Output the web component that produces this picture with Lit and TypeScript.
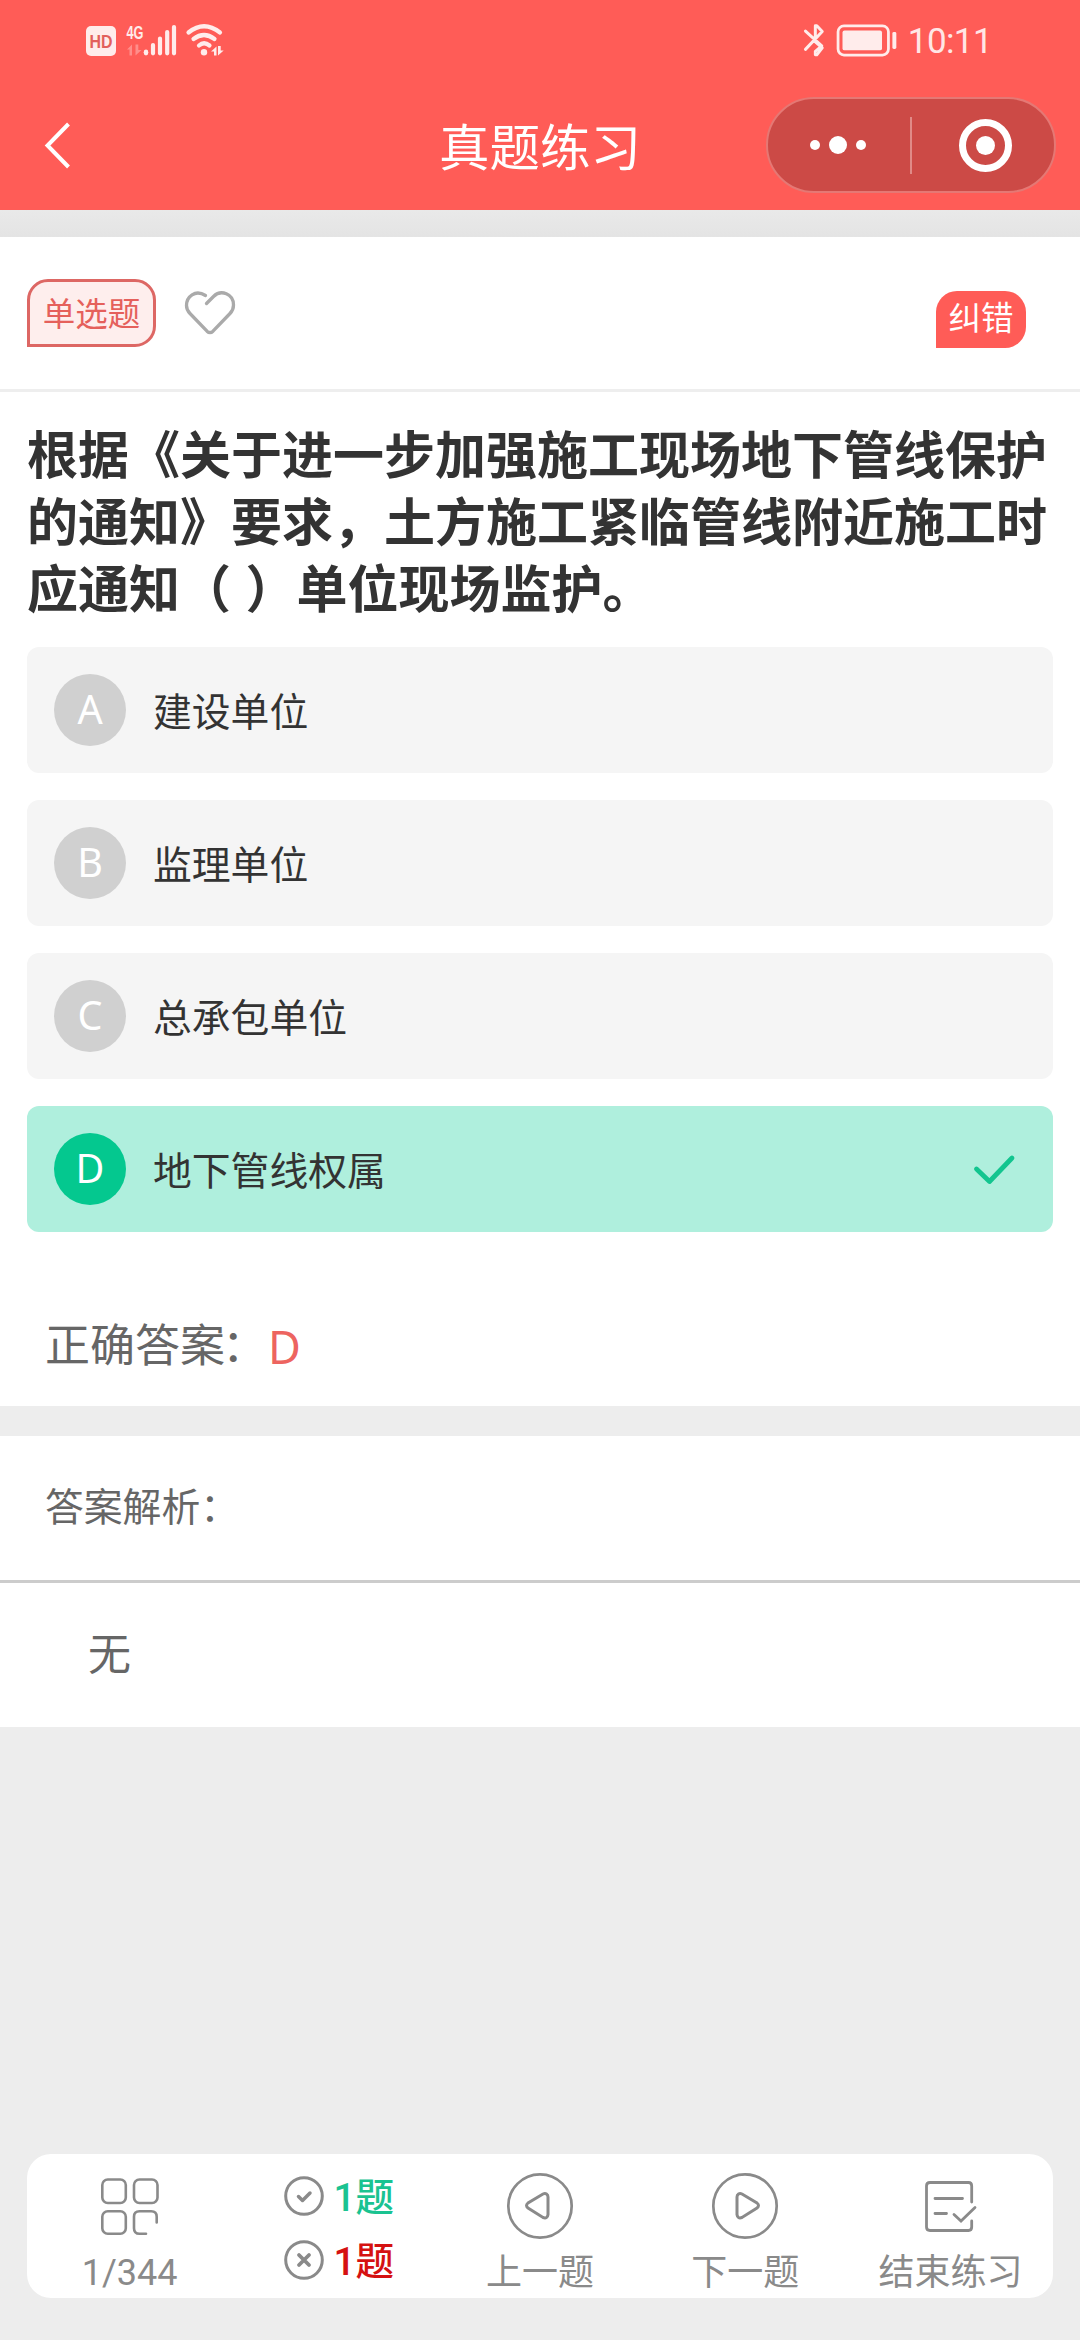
import { LitElement, html, css, svg } from "lit";
import { customElement, property } from "lit/decorators.js";
import { classMap } from "lit/directives/class-map.js";

interface Option { key: string; text: string; correct?: boolean; }

const OPTIONS: Option[] = [
  { key: "A", text: "建设单位" },
  { key: "B", text: "监理单位" },
  { key: "C", text: "总承包单位" },
  { key: "D", text: "地下管线权属", correct: true },
];

@customElement("status-bar")
class StatusBar extends LitElement {
  static styles = css`
    :host { display: flex; height: 80px; padding: 0 88px 0 86px; justify-content: space-between; color: #ffeceb; }
    svg { display: block; }
    .right { display: flex; width: 190px; white-space: nowrap; }
    .time { font: 35px/80px Roboto, sans-serif; padding-top: 2px; margin-left: 11px; letter-spacing: -0.6px; color: #ffe6e5; }
    .label { font-family: "Liberation Sans", sans-serif; font-weight: bold; }
  `;
  render() {
    return html`
      <svg width="150" height="80" viewBox="86 0 150 80" fill="currentColor">
        <rect x="86" y="26" width="30" height="30" rx="5" />
        <text class="label" x="101" y="48" font-size="18.500" text-anchor="middle" textLength="23" lengthAdjust="spacingAndGlyphs" fill="#e2605c">HD</text>
        <text class="label" x="126.500" y="38.500" font-size="19" textLength="17" lengthAdjust="spacingAndGlyphs">4G</text>
        <path d="M127 49.500l5-5v11h-2.500v-6zM135.500 44.500v11l6-5.500h-3.200v-5.500z" opacity=".35" />
        <circle cx="146" cy="52.500" r="2.300" />
        <g stroke="currentColor" stroke-width="4.200" stroke-linecap="round" fill="none">
          <path d="M146 51.500v1.800M153 45v8.300M160 38.500v14.800M167.200 32v21.300M174 27v26.300" />
        </g>
        <g stroke="currentColor" stroke-width="4.200" stroke-linecap="round" fill="none">
          <path d="M188.500 32.500Q204 20 220 32.500M193.500 39Q204 31 214.500 39M199 45.500Q204 41 209.500 45.500" />
        </g>
        <circle cx="204" cy="52.300" r="3.200" />
        <path d="M211 51.500l5.500-5v9h-2.500v-4zM218 46v9.500l5.700-5h-3v-4.500z" />
      </svg>
      <div class="right">
        <svg width="96" height="80" viewBox="802 0 96 80" fill="none" stroke="currentColor">
          <path d="M805.500 31L822 46L815.500 51.500V55H817L822.500 48L815.500 42V25.500H817L822.500 31.500L805.500 49.500" stroke-width="3" stroke-linecap="round" stroke-linejoin="round" />
          <rect x="838.500" y="25.700" width="51" height="29.500" rx="6" stroke-width="2.800" />
          <rect x="843" y="30.500" width="40" height="20" rx="2" fill="currentColor" stroke="none" />
          <rect x="893.500" y="32" width="4" height="17" rx="1.500" fill="currentColor" stroke="none" />
        </svg>
        <div class="time">10:11</div>
      </div>`;
  }
}

@customElement("nav-bar")
class NavBar extends LitElement {
  @property() heading = "";
  static styles = css`
    :host { display: grid; grid-template-columns: 313px 1fr 313px; height: 130px; align-items: center; color: #fff; }
    svg { display: block; }
    .back { margin-left: 40px; }
    .title { font-size: 50.500px; line-height: 60px; padding-top: 7px; text-align: center; white-space: nowrap; }
    .capsule { display: flex; justify-self: end; margin-right: 24px; box-sizing: border-box; width: 290px; height: 96px; border: 2px solid #e57874; border-radius: 48px; background: #cc4a46; }
  `;
  render() {
    return html`
      <svg class="back" width="34" height="50" viewBox="40 120 34 50" fill="none" stroke="currentColor" stroke-width="4">
        <path d="M68.500 124L47.500 145.500L68.500 167" />
      </svg>
      <div class="title">${this.heading}</div>
      <div class="capsule">
        <svg width="286" height="92" viewBox="768 99 286 92" fill="currentColor">
          <circle cx="815" cy="145" r="5" /><circle cx="838" cy="145" r="9" /><circle cx="861" cy="145" r="5" />
          <rect x="910" y="117" width="2" height="57" fill="#e08a87" />
          <circle cx="985.500" cy="145.500" r="23" fill="none" stroke="currentColor" stroke-width="7" />
          <circle cx="985.500" cy="145.500" r="9.500" />
        </svg>
      </div>`;
  }
}

@customElement("option-row")
class OptionRow extends LitElement {
  @property({ attribute: false }) option!: Option;
  static styles = css`
    :host { display: block; }
    .row { display: flex; align-items: center; height: 126px; padding: 0 36px 0 27px; box-sizing: border-box; border-radius: 12px; background: #f5f5f5; }
    .row.correct { background: #afefdd; }
    .key { width: 72px; height: 72px; border-radius: 50%; background: #d0d0d0; color: #fff; font: 39.500px/71px "Noto Sans", sans-serif; text-align: center; }
    .correct .key { background: #04c88f; }
    .text { flex: 1; margin-left: 27px; font-size: 38.800px; line-height: 60px; padding-top: 5px; color: #333; }
  `;
  render() {
    const o = this.option;
    return html`<div class=${classMap({ row: true, correct: !!o.correct })}>
      <div class="key">${o.key}</div>
      <div class="text">${o.text}</div>
      ${o.correct ? html`<svg width="44" height="32" viewBox="0 0 44 32" fill="none" stroke="#12c58f" stroke-width="4.800" stroke-linecap="round" stroke-linejoin="round">
        <path d="M3.500 16L16.500 28.500L39 5" /></svg>` : ""}
    </div>`;
  }
}

const grid = svg`
  <g stroke-width="2.600">
    <rect x="102.300" y="2179.500" width="23.500" height="23.500" rx="5.500" />
    <rect x="134" y="2179.500" width="23.500" height="23.500" rx="5.500" />
    <rect x="102.300" y="2211.200" width="23.500" height="22.500" rx="5.500" />
    <path d="M156.700 2222.500V2216.700Q156.700 2211.200 151.200 2211.200H139.500Q134 2211.200 134 2216.700V2228.200Q134 2233.700 139.500 2233.700H146" stroke-linecap="round" />
  </g>`;

const triangle = svg`
  <path d="M-6.500 -12Q-5 -13 -3 -12L12 -3Q15 -0.300 12 2L-3 11.500Q-7.500 13 -8 8.500V-9Q-8 -11 -6.500 -12Z" stroke-width="3" />`;

@customElement("tool-bar")
class ToolBar extends LitElement {
  static styles = css`
    :host { display: grid; grid-template-columns: repeat(5, 1fr); height: 144px; margin: 0 27px; border-radius: 24px; background: #fff; color: #8a8a8a; }
    svg { display: block; fill: none; stroke: currentColor; }
    .cell { display: flex; flex-direction: column; align-items: center; height: 144px; }
    .cell > svg { margin-top: 14px; }
    .label { font-size: 36px; line-height: 48px; margin-top: 5px; white-space: nowrap; }
    .counts { display: flex; flex-direction: column; align-items: center; padding-left: 8px; }
    .count { display: flex; align-items: center; gap: 10px; height: 64px; font-size: 38.500px; line-height: 62px; font-weight: 500; }
    .count span { padding-top: 2px; }
    .count:first-child { margin-top: 11px; }
    .right { color: #1ac391; }
    .wrong { color: #d51111; }
    .flip { transform: scaleX(-1); }
  `;
  render() {
    return html`
      <div class="cell">
        <svg width="76" height="76" viewBox="92 2168 76 76">${grid}</svg>
        <div class="label">1/344</div>
      </div>
      <div class="counts">
        <div class="count"><svg width="40" height="42" viewBox="0 0 40 42" stroke-width="3">
          <circle cx="20" cy="20" r="18.300" /><path d="M14.500 20.500L18.500 24.500L26 17" stroke-width="3.500" stroke-linecap="round" stroke-linejoin="round" /></svg>
          <span class="right">1题</span></div>
        <div class="count"><svg width="40" height="42" viewBox="0 0 40 42" stroke-width="3">
          <circle cx="20" cy="20" r="18.300" /><path d="M15 15L25 25M25 15L15 25" stroke-width="3.800" stroke-linecap="round" /></svg>
          <span class="wrong">1题</span></div>
      </div>
      <div class="cell">
        <svg class="flip" width="76" height="76" viewBox="-38 -38 76 76" stroke-width="2.700"><circle r="31.700" />${triangle}</svg>
        <div class="label">上一题</div>
      </div>
      <div class="cell">
        <svg width="76" height="76" viewBox="-38 -38 76 76" stroke-width="2.700"><circle r="31.700" />${triangle}</svg>
        <div class="label">下一题</div>
      </div>
      <div class="cell">
        <svg width="76" height="76" viewBox="912 2168 76 76" stroke-width="2.800">
          <path d="M971.700 2202V2186Q971.700 2182.500 968.500 2182.500H930Q926.500 2182.500 926.500 2186V2227Q926.500 2230.500 930 2230.500H968.500Q971.700 2230.500 971.700 2227V2221M935 2198.500H962.500M935 2213.500H946.500M954 2214.500L961 2221L975 2207.500" stroke-linecap="round" />
        </svg>
        <div class="label">结束练习</div>
      </div>`;
  }
}

@customElement("app-root")
class AppRoot extends LitElement {
  static styles = css`
    :host { display: flex; flex-direction: column; height: 2340px; background: #ededed; font-family: Roboto, "Noto Sans CJK SC", sans-serif; }
    .head { background: #ff5c57; height: 210px; }
    .band { height: 27px; background: linear-gradient(#e9e9e9, #e4e4e4); }
    .sheet { background: #fff; height: 1169px; }
    .meta { display: flex; align-items: flex-start; height: 155px; box-sizing: border-box; padding: 42px 54px 0 27px; border-bottom: 3px solid #eee; }
    .type { box-sizing: border-box; width: 129px; height: 68px; border: 3px solid #dd6764; border-radius: 21px 21px 21px 0; background: #feeeed; color: #e5605b; font-size: 32.500px; line-height: 67px; text-align: center; }
    .heart { margin: 9px 0 0 27px; }
    .fix { width: 90px; height: 57px; margin: 12px 0 0 auto; border-radius: 21px 21px 21px 0; background: #ff5c57; color: #fff; font-size: 32.500px; line-height: 56px; text-align: center; }
    .question { margin: 27px 27px; font-size: 51px; font-weight: 700; line-height: 67px; color: #333; white-space: nowrap; word-spacing: 3px; font-family: "Noto Sans CJK SC", sans-serif; }
    .line { display: block; }
    .options { display: flex; flex-direction: column; gap: 27px; padding: 0 27px; }
    .answer { display: flex; align-items: center; gap: 1px; padding: 83px 45px 0; font-size: 45px; line-height: 64px; color: #666; }
    .colon { margin-left: -3px; }
    .letter { color: #ed6460; font-family: "Noto Sans", sans-serif; }
    .explain { margin-top: 30px; background: #fff; }
    .subhead { height: 147px; box-sizing: border-box; padding: 0 45px; font-size: 38.800px; line-height: 144px; color: #666; border-bottom: 3px solid #ccc; }
    .body { height: 144px; padding: 0 88px; font-size: 43px; line-height: 145px; color: #666; }
    .tools { margin-top: auto; margin-bottom: 42px; }
  `;
  render() {
    return html`
      <div class="head"><status-bar></status-bar><nav-bar heading="真题练习"></nav-bar></div>
      <div class="band"></div>
      <div class="sheet">
        <div class="meta">
          <div class="type">单选题</div>
          <svg class="heart" width="54" height="50" viewBox="183 288 54 50" fill="none" stroke="#aaa" stroke-width="3.300" stroke-linecap="round" stroke-linejoin="round">
            <path d="M205.500 295.500C195 289 186.500 297 186.500 305.500Q186.500 310 190 313.500L207 331.200Q210 334 213 331.200L230 313.500Q233.500 310 233.500 305C233.500 294 221 289 213.500 296.500L206.500 303.500" />
          </svg>
          <div class="fix">纠错</div>
        </div>
        <div class="question">
          <span class="line">根据《关于进一步加强施工现场地下管线保护</span>
          <span class="line">的通知》要求，土方施工紧临管线附近施工时</span>
          <span class="line">应通知（ ）单位现场监护。</span>
        </div>
        <div class="options">${OPTIONS.map((o) => html`<option-row .option=${o}></option-row>`)}</div>
        <div class="answer"><span>正确答案<span class="colon">：</span></span><span class="letter">D</span></div>
      </div>
      <div class="explain">
        <div class="subhead">答案解析：</div>
        <div class="body">无</div>
      </div>
      <tool-bar class="tools"></tool-bar>`;
  }
}
